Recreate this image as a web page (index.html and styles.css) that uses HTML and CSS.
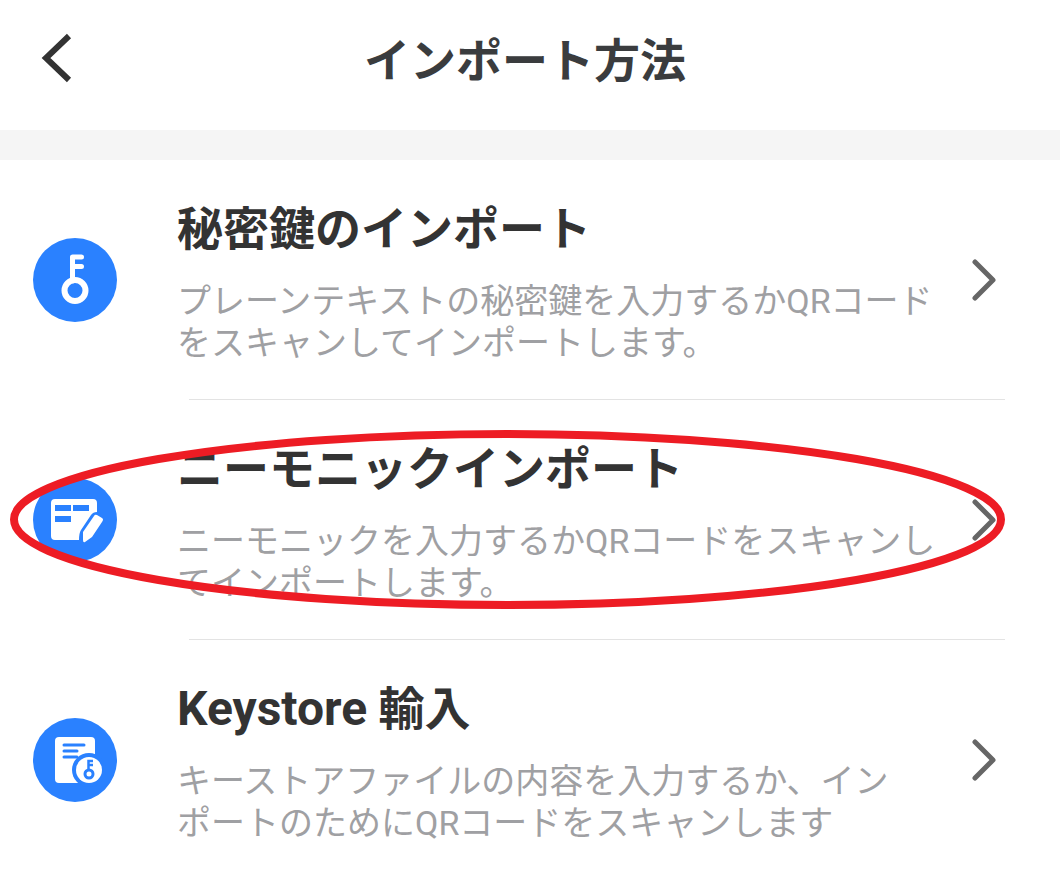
FILE: index.html
```html
<!DOCTYPE html>
<html lang="ja">
<head>
<meta charset="UTF-8" />
<meta name="viewport" content="width=device-width, initial-scale=1" />
<title>インポート方法</title>
<link rel="stylesheet" href="styles.css">
</head>
<body>
<header class="topbar">
	<button class="back" type="button" aria-label="戻る">
		<svg width="32" height="52" viewBox="0 0 32 52">
			<path d="M29 4 6 26 29 48" fill="none" stroke="#333" stroke-width="6" />
		</svg>
	</button>
	<h1>インポート方法</h1>
</header>
<main>
	<ul class="methods">
		<li>
			<a class="method" href="#private-key">
				<svg class="icon" width="84" height="84" viewBox="0 0 84 84">
					<circle cx="42" cy="42" r="42" fill="#2a81ff" />
					<circle cx="42" cy="52.5" r="10.5" fill="none" stroke="#fff" stroke-width="6" />
					<path d="M39.5 43V19H48.5M39.5 28.5H48.5" fill="none" stroke="#fff" stroke-width="5" stroke-linecap="round" stroke-linejoin="round" />
				</svg>
				<div class="text">
					<h2>秘密鍵のインポート</h2>
					<p>プレーンテキストの秘密鍵を入力するかQRコードをスキャンしてインポートします。</p>
				</div>
				<svg class="chevron" width="24" height="44" viewBox="0 0 24 44"><path d="M3 4 21 22 3 40" /></svg>
			</a>
		</li>
		<li>
			<a class="method" href="#mnemonic">
				<svg class="icon" width="84" height="84" viewBox="0 0 84 84">
					<circle cx="42" cy="42" r="42" fill="#2a81ff" />
					<path d="M22 21H60Q64 21 64 25V34Q60 34 58 37L48 52Q46 55 46 62H22Q18 62 18 58V25Q18 21 22 21Z" fill="#fff" />
					<path d="M22 27H38V33H22ZM40 27H56V33H40ZM22 38H38V44H22Z" fill="#2a81ff" />
					<path d="M61 38Q62 36 64 37L69 40Q71 41 69 44L59 59 52 64Q50 65 50 62L50 54Z" fill="#fff" />
				</svg>
				<div class="text">
					<h2>ニーモニックインポート</h2>
					<p>ニーモニックを入力するかQRコードをスキャンしてインポートします。</p>
				</div>
				<svg class="chevron" width="24" height="44" viewBox="0 0 24 44"><path d="M3 4 21 22 3 40" /></svg>
			</a>
			<svg class="mark"><ellipse cx="50%" cy="50%" /></svg>
		</li>
		<li>
			<a class="method" href="#keystore">
				<svg class="icon" width="84" height="84" viewBox="0 0 84 84">
					<circle cx="42" cy="42" r="42" fill="#2a81ff" />
					<rect x="22" y="19" width="40" height="46" rx="4" fill="#fff" />
					<path d="M31 27H51M31 33H44M31 39H44" fill="none" stroke="#2a81ff" stroke-width="3" stroke-linecap="round" />
					<circle cx="56" cy="52" r="17" fill="#2a81ff" />
					<circle cx="56" cy="52" r="13" fill="#fff" />
					<circle cx="56" cy="56" r="4" fill="none" stroke="#2a81ff" stroke-width="3" />
					<path d="M55.5 52V43H60M55.5 47H60" fill="none" stroke="#2a81ff" stroke-width="2.5" />
				</svg>
				<div class="text">
					<h2><span class="latin">Keystore</span> 輸入</h2>
					<p>キーストアファイルの内容を入力するか、イン<br>ポートのためにQRコードをスキャンします</p>
				</div>
				<svg class="chevron" width="24" height="44" viewBox="0 0 24 44"><path d="M3 4 21 22 3 40" /></svg>
			</a>
		</li>
	</ul>
</main>
</body>
</html>
```
FILE: styles.css
```css
* { box-sizing: border-box; }
body { margin: 0; background: #fff; color: #333;
	font-family: Roboto, "Noto Sans CJK JP", sans-serif;
}
h1, h2, p, ul { margin: 0; padding: 0; }
h1, h2 { font-size: 46px; line-height: 54px; font-weight: bold; }

.topbar { display: grid; grid-template-columns: 72px 1fr 72px; align-items: start;
	padding: 32px 10px 42px 0; border-bottom: 30px solid #f5f5f5; }
.topbar h1 { padding-top: 2px; text-align: center; color: #3a3c3e; }
.back { display: flex; justify-content: flex-end; padding: 0; border: 0; background: none; cursor: pointer; }

.methods { list-style: none; }
.methods li { position: relative; }
.methods li:not(:last-child)::after { content: ""; display: block; height: 1px;
	margin: 0 55px 0 189px; background: #e3e3e3; }
.method { display: flex; align-items: center; min-height: 239px; padding: 0 64px 0 33px;
	color: inherit; text-decoration: none; }
.icon { flex: none; margin-right: 60px; }
.text { flex: 1; min-width: 0; padding-top: 7px; }
.latin { font-size: 48px; }
.text p { margin-top: 24px; font-size: 34px; line-height: 42px; color: #9fa0a3; }
.chevron { flex: none; margin-left: 32px; }
.chevron path { fill: none; stroke: #666; stroke-width: 5; stroke-linecap: round; stroke-linejoin: round; }

.mark { position: absolute; top: 30px; left: 10px; width: calc(100% - 65px); height: 179px; pointer-events: none; }
.mark ellipse { rx: calc(50% - 4px); ry: calc(50% - 4px); fill: none; stroke: #ed1c24; stroke-width: 8; }
```
